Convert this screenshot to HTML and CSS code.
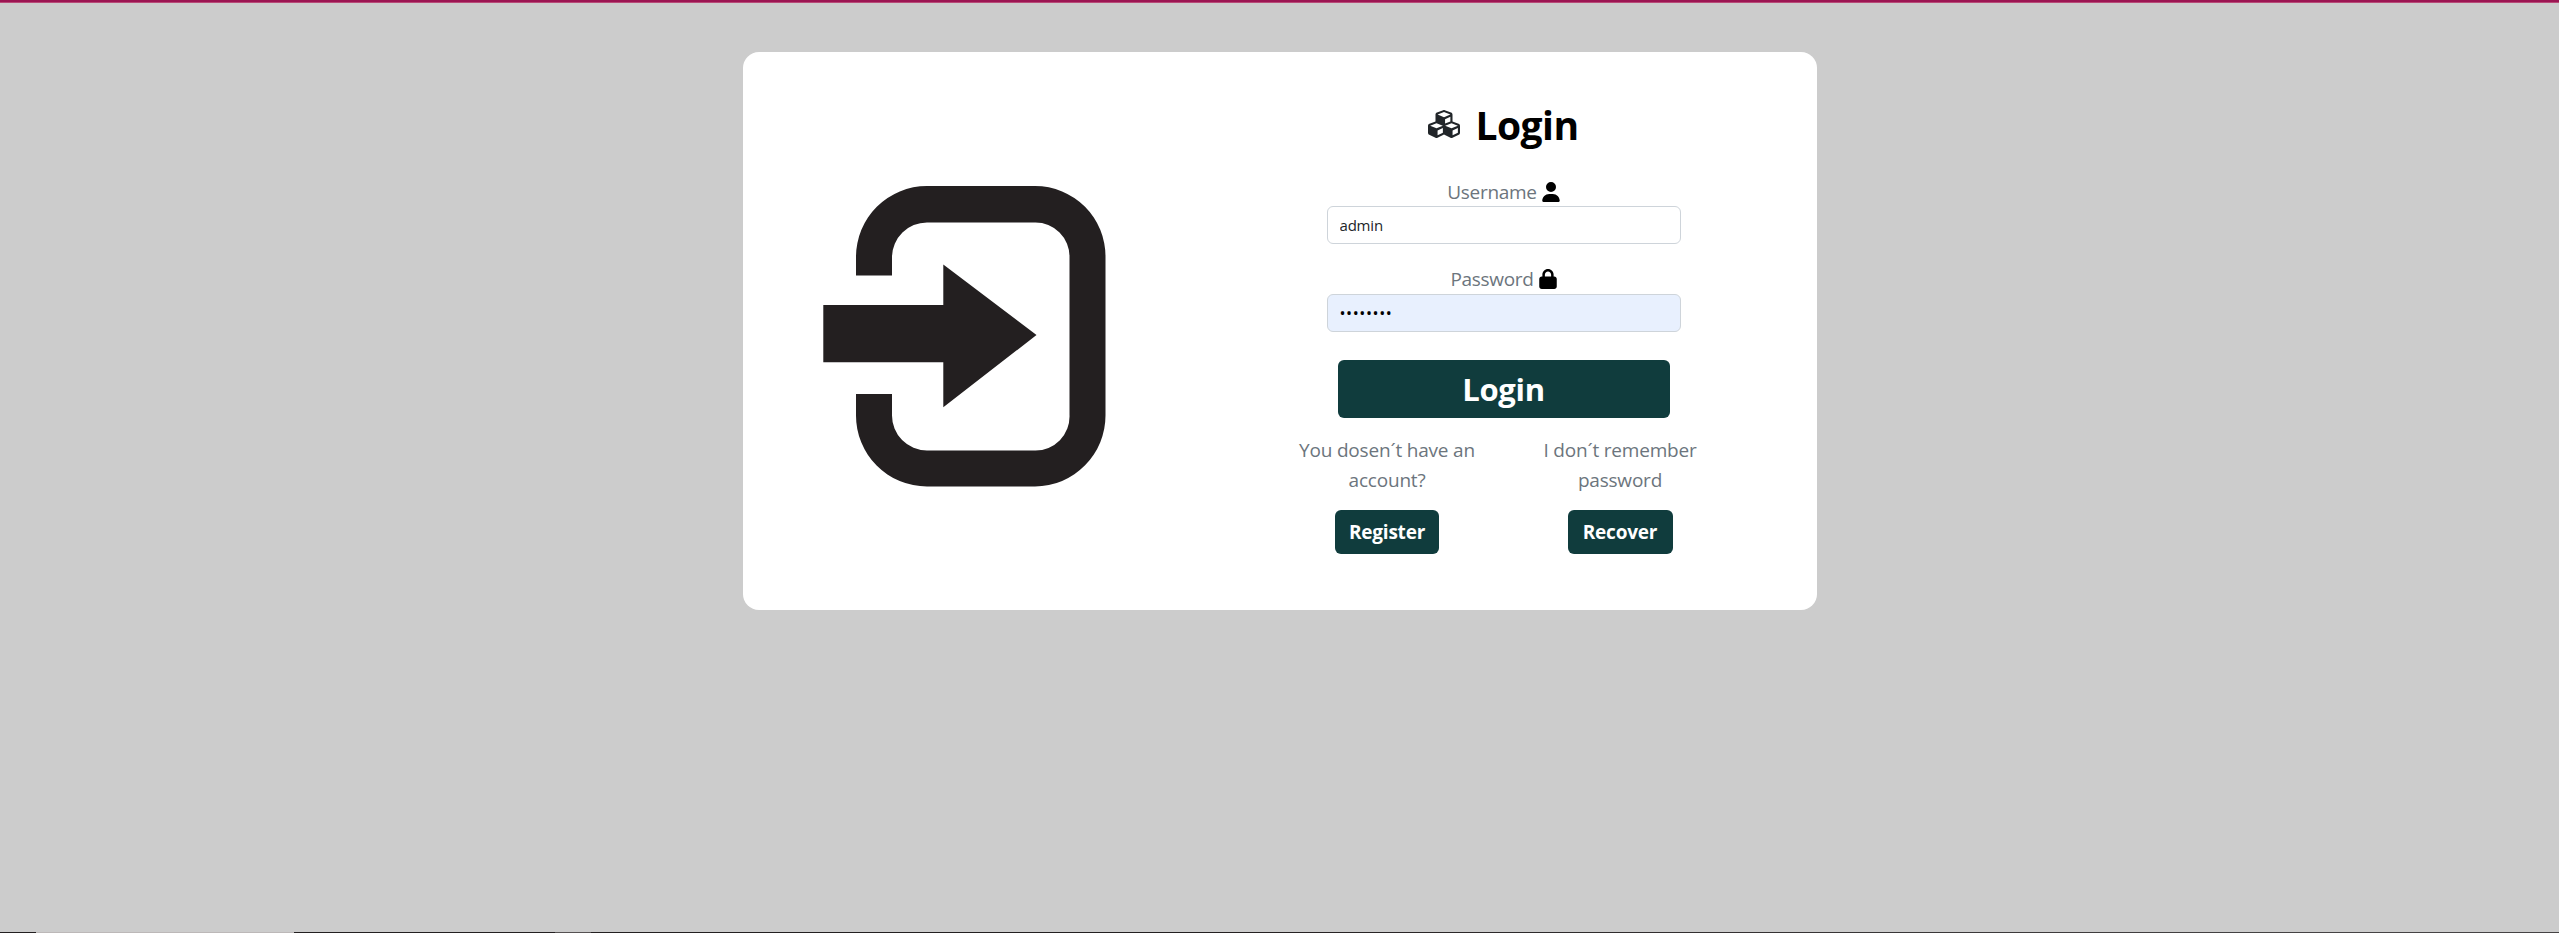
FILE: index.html
```html
<!DOCTYPE html>
<html lang="en">
<head>
<meta charset="utf-8">
<title>Login</title>
<link rel="stylesheet" href="styles.css">
</head>
<body>
<main class="page">
  <section class="card">
    <div class="art">
      <svg class="enter" viewBox="0 0 283 301">
        <path d="M33 89.500V71A71 71 0 0 1 104 0H212A70.500 70.500 0 0 1 282.500 71V229A71 71 0 0 1 212 300.500H104A71 71 0 0 1 33 229V208H69V229A35 35 0 0 0 104 264.500H212A34 34 0 0 0 246.500 229V71A34 34 0 0 0 212 36.500H104A35 35 0 0 0 69 71V89.500Z"/>
        <path d="M.3 119H120.300V78.500L213.500 149L120.300 221.300V176.300H.3Z"/>
      </svg>
    </div>
    <form class="login">
      <h1 class="title">
        <svg class="cubes" viewBox="0 0 512 512"><path d="M488.600 250.200L392 214V105.500c0-15-9.300-28.400-23.400-33.700l-100-37.500c-8.100-3.100-17.100-3.100-25.300 0l-100 37.500c-14.100 5.300-23.400 18.700-23.400 33.700V214l-96.600 36.200C9.300 255.500 0 268.900 0 283.900V394c0 13.600 7.700 26.100 19.900 32.200l100 50c10.100 5.100 22.100 5.100 32.200 0l103.900-52 103.900 52c10.100 5.100 22.100 5.100 32.200 0l100-50c12.200-6.100 19.900-18.600 19.900-32.200V283.900c0-15-9.300-28.400-23.400-33.700zM358 214.800l-85 31.900v-68.200l85-37v73.300zM154 104.100l102-38.200 102 38.200v.6l-102 41.400-102-41.400v-.6zm84 291.100l-85 42.500v-79.100l85-38.800v75.400zm0-112l-102 41.400-102-41.400v-.6l102-38.200 102 38.200v.6zm240 112l-85 42.500v-79.100l85-38.800v75.400zm0-112l-102 41.400-102-41.400v-.6l102-38.200 102 38.200v.6z"/></svg>
        <span class="title-text">Login</span>
      </h1>
      <label class="label user"><span>Username</span>
        <svg class="icon" viewBox="0 0 448 512"><path d="M224 256A128 128 0 1 0 224 0a128 128 0 1 0 0 256zm-45.700 48C79.800 304 0 383.800 0 482.300C0 498.700 13.300 512 29.700 512H418.300c16.400 0 29.700-13.300 29.700-29.700C448 383.800 368.200 304 269.700 304H178.300z"/></svg>
      </label>
      <input class="field" type="text" value="admin">
      <label class="label pass"><span>Password</span>
        <svg class="icon" viewBox="0 0 448 512"><path d="M144 144v48H304V144c0-44.200-35.800-80-80-80s-80 35.800-80 80zM80 192V144C80 64.500 144.500 0 224 0s144 64.500 144 144v48h16c35.300 0 64 28.700 64 64V448c0 35.300-28.700 64-64 64H64c-35.300 0-64-28.700-64-64V256c0-35.300 28.700-64 64-64H80z"/></svg>
      </label>
      <input class="field filled" type="password" value="password">
      <button class="btn submit" type="button">Login</button>
      <div class="links">
        <div class="link"><p class="hint">You dosen´t have an<br>account?</p><button class="btn small" type="button">Register</button></div>
        <div class="link"><p class="hint">I don´t remember<br>password</p><button class="btn small recover" type="button">Recover</button></div>
      </div>
    </form>
  </section>
  <footer class="edge"></footer>
</main>
</body>
</html>
```
FILE: styles.css
```css
* { box-sizing: border-box; }
body {
  margin: 0;
  background: #ccc;
  color: #212529;
  font-family: "Open Sans", "Noto Sans", sans-serif;
}
.page {
  height: 933px;
  display: flex;
  flex-direction: column;
  justify-content: space-between;
  padding-top: 52px;
  background: linear-gradient(#9c1552 0 2px, #b84a78 2px 3px, #ccc 3px);
}
.card {
  width: 1074px;
  height: 558px;
  margin-left: 743px;
  display: grid;
  grid-template-columns: 447px 627px;
  background: #fff;
  border-radius: 16px;
}
.art { padding: 133.500px 0 0 80px; }
.enter { display: block; width: 283px; height: 301px; fill: #231f20; }
.login {
  display: flex;
  flex-direction: column;
  align-items: center;
  padding-top: 49px;
}
.title {
  display: flex;
  align-items: center;
  gap: 15px;
  height: 48px;
  margin: 0;
  color: #000;
  font-size: 39px;
  line-height: 48px;
  letter-spacing: -.5px;
}
.cubes { width: 32px; height: 32px; margin-top: -2px; fill: #212529; }
.label {
  display: flex;
  align-items: center;
  gap: 5px;
  height: 30px;
  color: #6c757d;
  font-size: 19px;
  line-height: 30px;
  letter-spacing: -.3px;
}
.user { margin-top: 28px; }
.pass { margin-top: 20px; margin-bottom: 1px; }
.icon { width: 18px; height: 20px; fill: #000; }
.field {
  width: 354px;
  height: 38px;
  margin-top: -1px;
  padding: 6px 12px;
  border: 1px solid #ced4da;
  border-radius: 6px;
  background: #fff;
  color: #212529;
  font: 15px/24px "Open Sans", sans-serif;
  letter-spacing: -.2px;
}
.filled { background: #e8f0fe; color: #000; font-size: 16px; letter-spacing: .6px; }
.btn {
  border: 0;
  padding: 0;
  border-radius: 6px;
  background: #103c3d;
  color: #fff;
  font-family: inherit;
  font-weight: 700;
}
.submit {
  width: 332px;
  height: 58px;
  margin-top: 28px;
  padding-top: 1px;
  font-size: 31px;
  line-height: 57px;
  letter-spacing: -.3px;
}
.links {
  display: grid;
  grid-template-columns: 233px 233px;
  padding-top: 17px;
}
.link { display: flex; flex-direction: column; align-items: center; }
.hint {
  margin: 0 0 15px;
  color: #6c757d;
  font-size: 19px;
  line-height: 30px;
  letter-spacing: -.2px;
  text-align: center;
  white-space: nowrap;
}
.small { width: 104px; height: 44px; font-size: 19px; line-height: 44px; letter-spacing: -.2px; }
.recover { width: 105px; }
.edge {
  height: 1px;
  background: linear-gradient(90deg, #231f20 0 36px, #bcb8b8 36px 294px, #231f20 294px 555px, #555152 555px 591px, #231f20 591px 1200px, #454344 2300px);
}
```
